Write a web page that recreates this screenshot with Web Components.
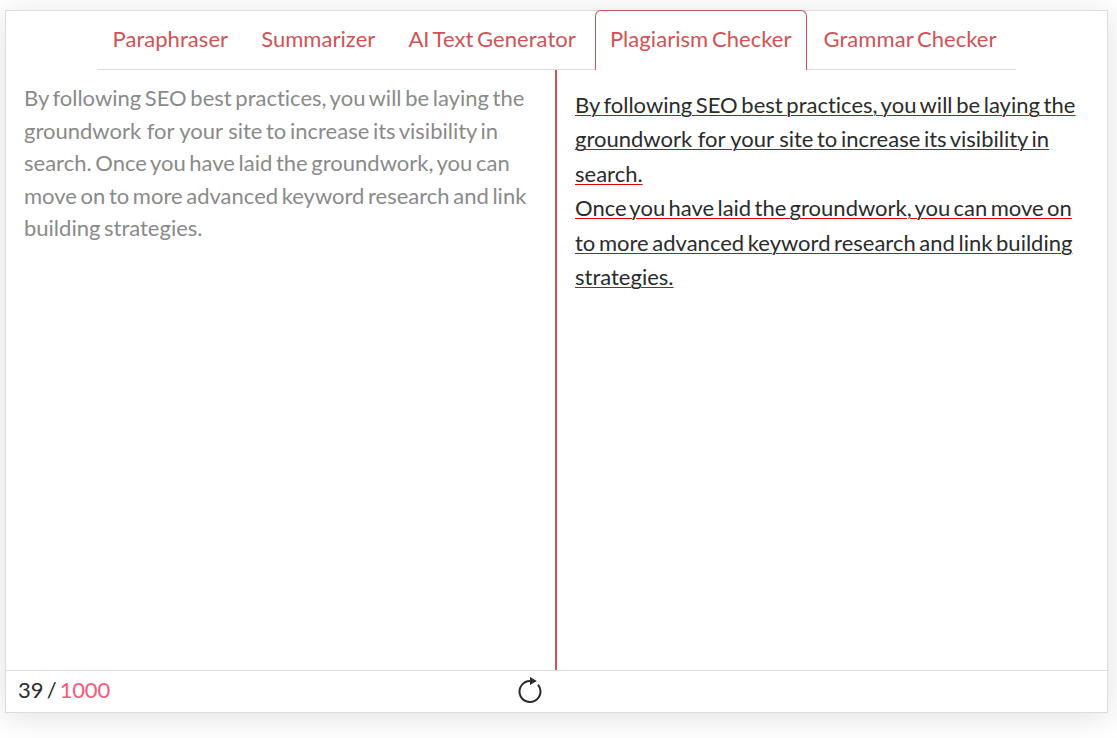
<!DOCTYPE html>
<html>
<head>
<meta charset="utf-8">
<title>Plagiarism Checker</title>
<style>
  html, body { margin: 0; height: 100%; background: #fff; }
  body { padding: 10px 9px 25px 5px; box-sizing: border-box; height: 738px; overflow: hidden; font-family: Lato, sans-serif; font-variant-ligatures: none; word-spacing: -2px; }
  .loose { word-spacing: 0; }
  .tight { word-spacing: -2.3px; }
</style>
</head>
<body>
<tool-card>
  <tool-tabs slot="tabs">
    <tool-tab>Paraphraser</tool-tab>
    <tool-tab>Summarizer</tool-tab>
    <tool-tab>AI Text Generator</tool-tab>
    <tool-tab active>Plagiarism Checker</tool-tab>
    <tool-tab>Grammar Checker</tool-tab>
  </tool-tabs>
  <input-pane slot="left">By following SEO best practices, you will be laying the <span class="loose">groundwork for your site</span><span> to increase its visibility in </span>search. Once you have laid the groundwork, you can move on to more advanced keyword research and link building strategies.</input-pane>
  <result-pane slot="right">
    <result-line>By following SEO best practices, you will be laying the <span class="loose">groundwork for your site</span><span> to increase its visibility in </span>search.</result-line>
    <result-line><span class="tight">Once you have laid the groundwork, you can move on </span>to more advanced keyword research and link building strategies.</result-line>
  </result-pane>
  <tool-footer slot="footer" count="39" limit="1000"></tool-footer>
</tool-card>

<script>
class ToolCard extends HTMLElement {
  constructor() {
    super();
    this.attachShadow({ mode: "open" }).innerHTML = `
    <style>
    :host {
      display: flex;
      flex-direction: column;
      height: 703px;
      box-sizing: border-box;
      border: 1px solid #dcdcdc;
      background: #fff;
      box-shadow: 0 4px 30px rgba(0, 0, 0, .12);
    }
    .body {
      flex: 1;
      min-height: 0;
      display: grid;
      grid-template-columns: 549px 2px 1fr;
    }
    .rule { background: #cf5356; }
    </style>
    <slot name="tabs"></slot>
    <div class="body">
      <slot name="left"></slot>
      <div class="rule"></div>
      <slot name="right"></slot>
    </div>
    <slot name="footer"></slot>
    `;
  }
}

class ToolTabs extends HTMLElement {
  constructor() {
    super();
    this.attachShadow({ mode: "open" }).innerHTML = `
    <style>
    :host {
      display: flex;
      justify-content: center;
      height: 59px;
      margin: -1px 91px 0;
      padding-right: 4px;
      border-bottom: 1px solid #dcdcdc;
    }
    </style>
    <slot></slot>
    `;
  }
}

class ToolTab extends HTMLElement {
  constructor() {
    super();
    this.attachShadow({ mode: "open" }).innerHTML = `
    <style>
    :host {
      display: block;
      box-sizing: border-box;
      height: 60px;
      padding: 14px 15.5px 0;
      border: 1px solid transparent;
      border-bottom: 0;
      border-radius: 6px 6px 0 0;
      color: #cf5356;
      font-size: 22px;
      line-height: 28px;
      letter-spacing: .05px;
      white-space: nowrap;
    }
    :host([active]) {
      margin-left: 2.5px;
      border-color: #cf5356;
      background: #fff;
      padding: 14px 14.5px 0 14px;
    }
    </style>
    <slot></slot>
    `;
  }
}

class InputPane extends HTMLElement {
  constructor() {
    super();
    this.attachShadow({ mode: "open" }).innerHTML = `
    <style>
    :host {
      display: block;
      padding: 12px 18px 0;
      color: #8a8a8a;
      font-size: 22px;
      line-height: 32.5px;
    }
    </style>
    <slot></slot>
    `;
  }
}

class ResultPane extends HTMLElement {
  constructor() {
    super();
    this.attachShadow({ mode: "open" }).innerHTML = `
    <style>
    :host {
      display: block;
      padding: 18px 18px 0;
      color: #2b2b2b;
      font-size: 22px;
      line-height: 34.4px;
    }
    </style>
    <slot></slot>
    `;
  }
}

class ResultLine extends HTMLElement {
  constructor() {
    super();
    this.attachShadow({ mode: "open" }).innerHTML = `
    <style>
    :host { display: block; }
    span {
      text-decoration: underline #e00000 1px;
      text-underline-offset: 2px;
      text-decoration-skip-ink: auto;
    }
    </style>
    <span><slot></slot></span>
    `;
  }
}

class ToolFooter extends HTMLElement {
  constructor() {
    super();
    let count = this.getAttribute("count");
    let limit = this.getAttribute("limit");
    this.attachShadow({ mode: "open" }).innerHTML = `
    <style>
    :host {
      display: grid;
      grid-template-columns: 500px 24px 1fr;
      align-items: center;
      box-sizing: border-box;
      height: 42px;
      padding: 0 12px 5px;
      border-top: 1px solid #dcdcdc;
      color: #2b2b2b;
      font-size: 22px;
      word-spacing: -2.5px;
    }
    .limit { color: #f9587c; letter-spacing: -.2px; }
    svg { display: block; margin-top: 2px; }
    </style>
    <div>${count} / <span class="limit">${limit}</span></div>
    <svg width="24" height="28" viewBox="0 0 24 28" fill="none">
      <path d="M12 5A10.5 10.5 0 1 0 20 8.7" stroke="#2b2b2b" stroke-width="2"/>
      <path d="M12 1l6.8 4-6.8 4z" fill="#2b2b2b"/>
    </svg>
    <div></div>
    `;
  }
}

customElements.define("tool-card", ToolCard);
customElements.define("tool-tabs", ToolTabs);
customElements.define("tool-tab", ToolTab);
customElements.define("input-pane", InputPane);
customElements.define("result-pane", ResultPane);
customElements.define("result-line", ResultLine);
customElements.define("tool-footer", ToolFooter);
</script>
</body>
</html>
